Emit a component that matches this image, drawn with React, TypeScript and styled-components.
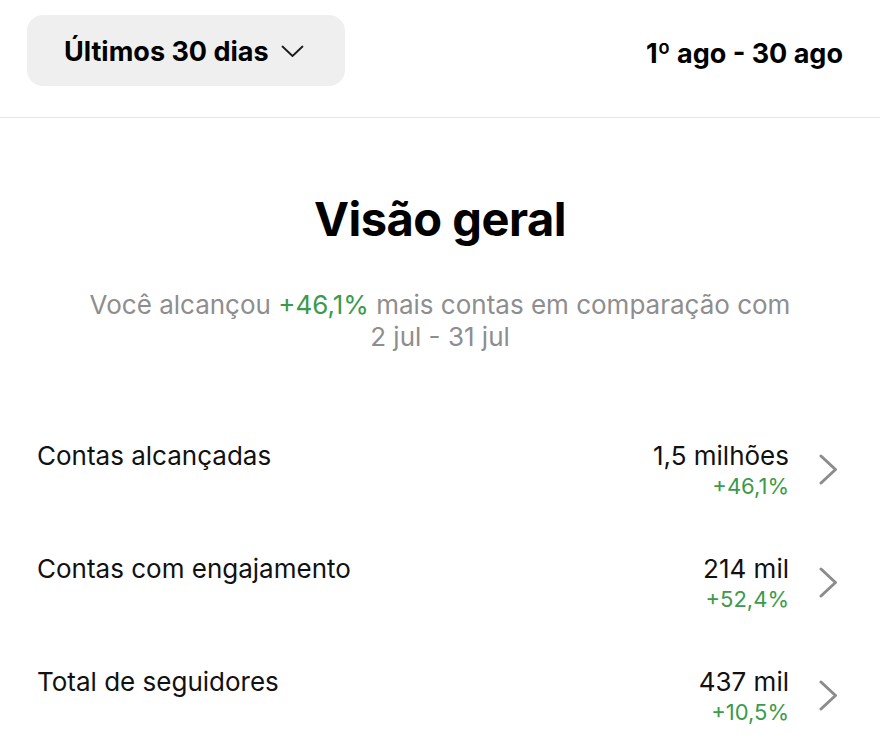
import styled, { createGlobalStyle } from "styled-components";

const GlobalStyle = createGlobalStyle`
  html, body {
    margin: 0;
    padding: 0;
    background: #ffffff;
    font-family: Inter, "Noto Sans", "DejaVu Sans", sans-serif;
    color: #000000;
  }
`;

const metrics = [
  { label: "Contas alcançadas", value: "1,5 milhões", change: "+46,1%" },
  { label: "Contas com engajamento", value: "214 mil", change: "+52,4%" },
  { label: "Total de seguidores", value: "437 mil", change: "+10,5%" },
];

function ChevronDown() {
  return (
    <svg width="23" height="13" viewBox="0 0 23 13" fill="none">
      <path d="M1.5 1.5 L11.5 11 L21.5 1.5" stroke="#1a1a1a" strokeWidth="1.8" strokeLinecap="round" strokeLinejoin="round" />
    </svg>
  );
}

function ChevronRight() {
  return (
    <svg width="19" height="31" viewBox="0 0 19 31" fill="none">
      <path d="M2 2 L16.5 15.5 L2 29" stroke="#8c8c8c" strokeWidth="3" strokeLinecap="round" strokeLinejoin="round" />
    </svg>
  );
}

export default function App() {
  return (
    <Page>
      <GlobalStyle />
      <Header>
        <RangeButton>
          Últimos 30 dias
          <ChevronDown />
        </RangeButton>
        <DateRange>1º ago - 30 ago</DateRange>
      </Header>

      <Overview>
        <Title>Visão geral</Title>
        <Subtitle>
          Você alcançou <Positive>+46,1%</Positive> mais contas em comparação com
          <br />2 jul - 31 jul
        </Subtitle>
      </Overview>

      <MetricList>
        {metrics.map((m) => (
          <MetricRow key={m.label}>
            <MetricLabel>{m.label}</MetricLabel>
            <MetricRight>
              <MetricValues>
                <MetricValue>{m.value}</MetricValue>
                <MetricChange>{m.change}</MetricChange>
              </MetricValues>
              <ChevronRight />
            </MetricRight>
          </MetricRow>
        ))}
      </MetricList>
    </Page>
  );
}

const Page = styled.div`
  width: 880px;
  height: 750px;
  overflow: hidden;
  background: #ffffff;
`;

const Header = styled.div`
  height: 118px;
  box-sizing: border-box;
  padding: 15px 37px 0 27px;
  display: flex;
  align-items: flex-start;
  justify-content: space-between;
  border-bottom: 1.5px solid #e6e6e6;
`;

const RangeButton = styled.button`
  width: 318px;
  height: 71px;
  border: none;
  border-radius: 16px;
  background: #efefef;
  display: flex;
  align-items: center;
  gap: 12px;
  padding: 2px 0 0 37px;
  font-family: inherit;
  font-size: 27px;
  font-weight: 700;
  color: #000000;
  cursor: pointer;
`;

const DateRange = styled.div`
  height: 73px;
  display: flex;
  align-items: center;
  padding-top: 2px;
  font-size: 27px;
  font-weight: 700;
`;

const Overview = styled.div`
  display: flex;
  flex-direction: column;
  align-items: center;
  padding-top: 72px;
`;

const Title = styled.h1`
  margin: 0;
  font-size: 47px;
  font-weight: 700;
  line-height: 58px;
  letter-spacing: -0.5px;
`;

const Subtitle = styled.p`
  margin: 41px 0 0;
  text-align: center;
  font-size: 26px;
  line-height: 32px;
  color: #8e8e8e;
`;

const Positive = styled.span`
  color: #3b9a4b;
`;

const MetricList = styled.div`
  display: flex;
  flex-direction: column;
  padding: 86px 42px 0 37px;
  gap: 50px;
`;

const MetricRow = styled.div`
  display: flex;
  align-items: flex-start;
  justify-content: space-between;
  height: 63px;
`;

const MetricLabel = styled.div`
  font-size: 26px;
  line-height: 34px;
  color: #111111;
`;

const MetricRight = styled.div`
  display: flex;
  align-items: center;
  gap: 30px;
`;

const MetricValues = styled.div`
  display: flex;
  flex-direction: column;
  align-items: flex-end;
`;

const MetricValue = styled.div`
  font-size: 26px;
  line-height: 34px;
  color: #111111;
`;

const MetricChange = styled.div`
  font-size: 22px;
  line-height: 26px;
  color: #3b9a4b;
`;
